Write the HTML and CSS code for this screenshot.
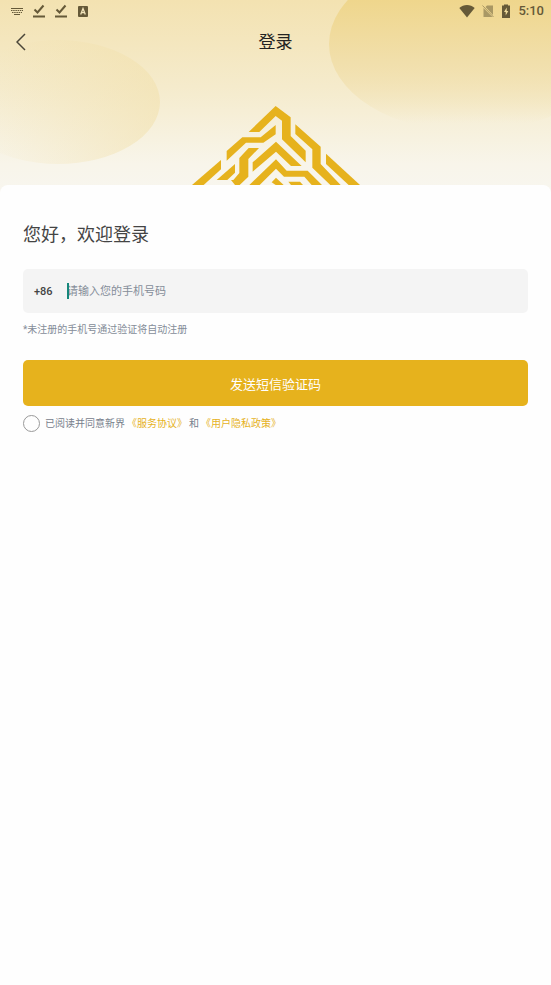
FILE: index.html
```html
<!DOCTYPE html>
<html lang="zh-CN">
<head>
  <meta charset="UTF-8" />
  <meta name="viewport" content="width=device-width, initial-scale=1.0" />
  <title>登录</title>
  <link rel="stylesheet" href="styles.css">
</head>
<body>
  <header class="hero">
    <div class="blob blob-left"></div>
    <div class="blob blob-right"></div>

    <div class="status-bar">
      <div class="status-group">
        <svg width="14" height="14" viewBox="0 0 14 14" fill="none" stroke="currentColor" stroke-width="1">
          <path d="M1 4.5h12" />
          <path d="M1 6.5h12M2 8.5h10" stroke-dasharray="1.5 0.7" />
          <path d="M4 10.5h6" />
        </svg>
        <svg width="14" height="14" viewBox="0 0 14 14" fill="none" stroke="currentColor" stroke-width="2">
          <path d="M2.5 5.5l3 3 6-7M1 12.5h12" />
        </svg>
        <svg width="14" height="14" viewBox="0 0 14 14" fill="none" stroke="currentColor" stroke-width="2">
          <path d="M2.5 5.5l3 3 6-7M1 12.5h12" />
        </svg>
        <svg width="14" height="14" viewBox="0 0 14 14">
          <rect x="2" y="2" width="10" height="11" rx="1" fill="currentColor" />
          <path d="M4.7 10.5L7 4.5l2.3 6M5.5 8.7h3" fill="none" stroke="#f3e5bb" stroke-width="1.3" />
        </svg>
      </div>
      <div class="status-group right">
        <svg width="16" height="14" viewBox="0 0 16 14">
          <path d="M8 13.5L.3 4C4.5 0 11.5 0 15.7 4z" fill="currentColor" />
        </svg>
        <svg class="faded" width="12" height="14" viewBox="0 0 12 14">
          <path d="M5 1.5h6v9.500L3.500 3zM1.500 4l9 9h-9z" fill="currentColor" />
          <path d="M.5 1.500l11 11.500" stroke="currentColor" />
        </svg>
        <svg width="10" height="14" viewBox="0 0 10 14">
          <path d="M3 1.5V.5h4v1h2V14H1V1.5z" fill="currentColor" />
          <path d="M5.7 3.5L3 8h1.7v3.5L7.3 7H5.7z" fill="#f0dc9c" />
        </svg>
        <span class="time">5:10</span>
      </div>
    </div>

    <nav class="nav-bar">
      <button class="back" type="button" aria-label="返回">
        <svg width="10" height="18" viewBox="0 0 10 18" fill="none" stroke="currentColor" stroke-width="1.5">
          <path d="M9 1L1 9l8 8" />
        </svg>
      </button>
      <h1 class="title">登录</h1>
    </nav>

    <svg class="logo" viewBox="21 21 504 240" fill="currentColor">
      <path d="M272 24L317 58V114L362 158V193L291 124V68L272 54L223 102H191z" />
      <path d="M272 81V109L235 134H183L125 188V159L172 118H227z" />
      <path d="M331 79L407 146V198L467 261H436L382 209V154L331 108z" />
      <path d="M423 167L525 261H491L423 198z" />
      <path d="M108 186V214L56 261H21z" />
      <path d="M150 198V224L127 246H95z" />
      <path d="M191 150H222L190 183V236L164 261H150L138 246H145L163 225V180z" />
      <path d="M273 131L350 204H318L273 161L203 221V193z" />
      <path d="M273 184L305 218H368L411 261H380L358 236H297L273 212L224 261H193z" />
      <path d="M273 239L296 261H272L260 253z" />
      <path d="M310 251H345L354 261H318z" />
    </svg>
  </header>

  <main class="card">
    <h2 class="welcome">您好，欢迎登录</h2>
    <form>
      <div class="phone-row">
        <label class="prefix" for="phone">+86</label>
        <input class="phone" id="phone" type="tel" placeholder="请输入您的手机号码">
      </div>
      <p class="hint">*未注册的手机号通过验证将自动注册</p>
      <button class="submit" type="button">发送短信验证码</button>
      <div class="agree">
        <input class="check" id="agree" type="checkbox">
        <label for="agree">已阅读并同意新界<a href="#">《服务协议》</a>和<a href="#">《用户隐私政策》</a></label>
      </div>
    </form>
  </main>
</body>
</html>
```
FILE: styles.css
```css
* {
  box-sizing: border-box;
}

body {
  margin: 0;
  background: #fefefe;
  color: #444;
  font-family: Roboto, "Noto Sans CJK SC", sans-serif;
}

.hero {
  position: relative;
  overflow: hidden;
  padding-bottom: 8px;
  background: linear-gradient(#f3e2b1, #f5ebcc 45%, #f8f5ea 85%, #f8f6ef);
}

/* background shapes */
.blob {
  position: absolute;
  border-radius: 50%;
}

.blob-left {
  left: -44px;
  top: 40px;
  width: 204px;
  height: 124px;
  background: linear-gradient(100deg, rgba(245, 234, 203, 0) 20%, rgba(241, 222, 165, 0.5));
}

.blob-right {
  right: -60px;
  top: -44px;
  width: 282px;
  height: 176px;
  background: linear-gradient(#efd68c 25%, #f1dfab 60%, rgba(246, 239, 216, 0) 95%);
}

.status-bar {
  position: relative;
  display: flex;
  justify-content: space-between;
  align-items: center;
  height: 22px;
  padding: 0 7px 0 10px;
  color: #655938;
}

.status-group {
  display: flex;
  align-items: center;
  gap: 8px;
}

.status-group.right {
  gap: 7px;
}

.status-group svg {
  display: block;
}

.faded {
  opacity: 0.5;
}

.time {
  font-size: 13px;
  line-height: 16px;
  font-weight: 500;
}

.nav-bar {
  position: relative;
  display: flex;
  justify-content: center;
  align-items: center;
  height: 40px;
}

.back {
  position: absolute;
  left: 8px;
  padding: 8px;
  border: none;
  background: none;
  color: #4a4639;
  cursor: pointer;
}

.back svg {
  display: block;
}

.title {
  margin: 0;
  color: #222;
  font-size: 17px;
  line-height: 24px;
  font-weight: 400;
}

.logo {
  position: relative;
  display: block;
  width: 168px;
  margin: 43px auto 0;
  color: #e6b21d;
}

.card {
  position: relative;
  margin-top: -8px;
  padding: 37px 23px;
  border-radius: 8px 8px 0 0;
  background: #fefefe;
}

.welcome {
  margin: 0 0 21px;
  font-size: 18px;
  line-height: 26px;
  font-weight: 400;
}

.phone-row {
  display: flex;
  align-items: center;
  height: 44px;
  padding: 0 11px;
  border-radius: 5px;
  background: #f4f4f4;
}

.prefix {
  width: 33px;
  font-size: 11px;
  font-weight: 500;
}

.phone {
  flex: 1;
  min-width: 0;
  height: 16px;
  padding: 0;
  border: none;
  border-left: 2px solid #16877a;
  outline: none;
  background: none;
  font-family: inherit;
  font-size: 11px;
  text-indent: -2px;
}

.phone::placeholder {
  color: #858d99;
}

.hint {
  margin: 8px 0 22px;
  color: #858d99;
  font-size: 10px;
  line-height: 17px;
}

.submit {
  display: block;
  width: 100%;
  height: 46px;
  border: none;
  border-radius: 5px;
  background: #e6b21d;
  color: #fff;
  font-family: inherit;
  font-size: 13px;
  cursor: pointer;
}

.agree {
  display: flex;
  align-items: center;
  gap: 5px;
  margin-top: 9px;
  color: #77808c;
  font-size: 10px;
  line-height: 17px;
}

.agree a {
  margin: 0 2px;
  color: #e6b21d;
  text-decoration: none;
}

.check {
  appearance: none;
  width: 17px;
  height: 17px;
  margin: 0;
  border: 1px solid #999;
  border-radius: 50%;
}

.check:checked {
  background: #e6b21d;
}
```
